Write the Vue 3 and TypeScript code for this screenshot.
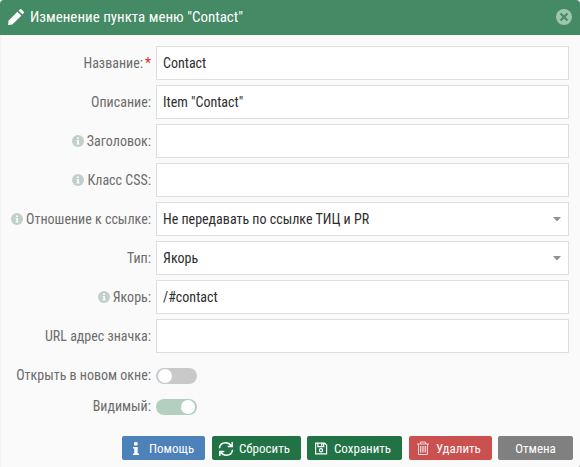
<script setup lang="ts">
import { ref } from 'vue'

interface Field {
  label: string
  value: string
  required?: boolean
  info?: boolean
  select?: boolean
}

const fields = ref<Field[]>([
  { label: 'Название:', value: 'Contact', required: true },
  { label: 'Описание:', value: 'Item "Contact"' },
  { label: 'Заголовок:', value: '', info: true },
  { label: 'Класс CSS:', value: '', info: true },
  { label: 'Отношение к ссылке:', value: 'Не передавать по ссылке ТИЦ и PR', info: true, select: true },
  { label: 'Тип:', value: 'Якорь', select: true },
  { label: 'Якорь:', value: '/#contact', info: true },
  { label: 'URL адрес значка:', value: '' },
])

const toggles = ref([
  { label: 'Открыть в новом окне:', on: false },
  { label: 'Видимый:', on: true },
])
</script>

<template>
  <div class="window">
    <header class="header">
      <svg class="pencil" width="18" height="18" viewBox="0 0 18 18">
        <path d="M1 17l.6-4.400L10.400 3.800l3.900 3.900-8.900 8.700zM11.600 2.600l1.200-1.200q.9-.8 1.800 0l2 2q.9.900 0 1.800l-1.200 1.200z" fill="#fff" />
      </svg>
      <h1 class="title">Изменение пункта меню "Contact"</h1>
      <button class="close" aria-label="Закрыть">
        <svg width="16" height="16" viewBox="0 0 16 16">
          <circle cx="8" cy="8" r="8" fill="#a1c4b0" />
          <path d="M4.500 4.500l7 7M11.500 4.500l-7 7" stroke="#448a64" stroke-width="2.100" />
        </svg>
      </button>
    </header>

    <main class="form">
      <div v-for="f in fields" :key="f.label" class="row">
        <label class="label">
          <svg v-if="f.info" class="info" width="12" height="12" viewBox="0 0 12 12">
            <circle cx="6" cy="6" r="6" fill="#c1d0c8" />
            <path d="M5 2.500h2v1.600H5zM4.500 5h2.500v3.500h.7v1H4.400v-1h.8V6h-.7z" fill="#fafafa" />
          </svg>
          <span>{{ f.label }}</span><span v-if="f.required" class="star">*</span>
        </label>
        <div class="box">
          <span>{{ f.value }}</span>
          <svg v-if="f.select" class="arrow" width="8" height="4" viewBox="0 0 8 4">
            <path d="M0 0h8L4.500 4h-1z" fill="#919191" />
          </svg>
        </div>
      </div>
      <div v-for="t in toggles" :key="t.label" class="row toggle-row">
        <label class="label">{{ t.label }}</label>
        <button class="switch" :class="{ on: t.on }" role="switch" :aria-checked="t.on" @click="t.on = !t.on">
          <span class="knob"></span>
        </button>
      </div>
    </main>

    <footer class="footer">
      <button class="btn help">
        <svg width="16" height="16" viewBox="0 0 16 16">
          <path d="M6 1.500q2-1.100 3.600 0v2.600q-1.700 1-3.600 0zM5 6h4.700v6.400H11V14H5v-1.600h1.300V7.600H5z" fill="#fff" />
        </svg>
        <span>Помощь</span>
      </button>
      <button class="btn reset">
        <svg width="16" height="16" viewBox="0 0 16 16" fill="none" stroke="#fff" stroke-width="1.500">
          <path d="M1.500 7.200C1.800 3.700 4.500 1.700 7.700 1.700c2.300 0 4 1 5.500 3M14.200 1v4.500H9.700M14.500 8.800c-.3 3.500-3 5.500-6.200 5.500-2.300 0-4-1-5.500-3M1.800 15v-4.500h4.500" />
        </svg>
        <span>Сбросить</span>
      </button>
      <button class="btn save">
        <svg width="16" height="16" viewBox="0 0 16 16" fill="none" stroke="#fff" stroke-width="1.200">
          <path d="M2.600 2.100h8.900l2.100 1.900v8.900H2.600zM4.900 2.100v3.600h5.800V2.100" />
          <path d="M8 2.500h1.500v2.200H8z" fill="#fff" stroke="none" />
          <circle cx="8" cy="9.300" r="1.600" />
        </svg>
        <span>Сохранить</span>
      </button>
      <button class="btn delete">
        <svg width="16" height="16" viewBox="0 0 16 16" fill="none" stroke="#f6d9d9" stroke-width="1">
          <path d="M2 3h12M5.500 3v-2h5v2M3.500 3v10.500h9V3M5.500 5v6.500M7.200 5v6.500M8.900 5v6.500M10.600 5v6.500" />
        </svg>
        <span>Удалить</span>
      </button>
      <button class="btn cancel"><span>Отмена</span></button>
    </footer>
    <i class="grip"></i>
  </div>
</template>

<style>
body {
  background: #fff;
}
</style>

<style scoped>
.window {
  position: relative;
  box-sizing: border-box;
  height: 467px;
  overflow: hidden;
  border-radius: 4px 4px 0 0;
  background: linear-gradient(to right, #f3f3f3 1px, #fafafa 1px);
  font-family: Roboto, "Liberation Sans", sans-serif;
  font-stretch: 75%;
  font-size: 14px;
}
.header {
  display: flex;
  align-items: center;
  box-sizing: border-box;
  height: 35px;
  padding: 0 8px 2px 7px;
  background: #448a64;
}
.title {
  flex: 1;
  margin: 0 0 0 5px;
  color: #fff;
  font-size: 15px;
  font-weight: 400;
}
.close {
  display: flex;
  margin: 0;
  padding: 0;
  border: 0;
  background: none;
}
.form {
  display: flex;
  flex-direction: column;
  gap: 5px;
  padding: 11px 11px 0 0;
}
.row {
  display: flex;
  align-items: center;
  gap: 5px;
  height: 34px;
}
.label {
  display: flex;
  align-items: center;
  justify-content: flex-end;
  width: 151px;
  color: #6c6c6c;
  white-space: nowrap;
}
.info {
  margin-right: 3px;
}
.star {
  margin-left: 2px;
  color: #e22;
}
.box {
  display: flex;
  flex: 1;
  align-items: center;
  justify-content: space-between;
  box-sizing: border-box;
  height: 34px;
  padding: 0 7px 0 6px;
  border: 1px solid #dedede;
  background: #fff;
  color: #2d2d2d;
}
.toggle-row {
  height: 16px;
  margin-bottom: 10px;
}
.toggle-row .label {
  padding-bottom: 2px;
}
.row:not(.toggle-row) + .toggle-row {
  margin-top: 10px;
}
.switch {
  display: flex;
  box-sizing: border-box;
  width: 41px;
  height: 16px;
  padding: 1px;
  border: 0;
  border-radius: 8px;
  background: #c9c9c9;
}
.switch.on {
  justify-content: flex-end;
  background: #b2cfc0;
}
.knob {
  width: 14px;
  height: 14px;
  margin: 0 1px;
  border-radius: 50%;
  background: #fff;
}
.footer {
  display: flex;
  justify-content: flex-end;
  gap: 6px;
  padding: 11px 7px 0 0;
}
.btn {
  display: flex;
  align-items: center;
  box-sizing: border-box;
  height: 24px;
  padding: 1px 0 0 6px;
  border: 0;
  border-radius: 2px;
  color: #fff;
  font: inherit;
  font-size: 13px;
  white-space: nowrap;
}
.btn svg {
  flex: none;
  margin-right: 5px;
}
.help {
  width: 83px;
  margin-right: 1px;
  background: #4c81b9;
}
.reset {
  width: 89px;
  background: #217346;
}
.save {
  width: 95px;
  margin-right: 1px;
  background: #217346;
}
.delete {
  width: 83px;
  background: #cb5050;
}
.cancel {
  justify-content: center;
  width: 75px;
  padding: 1px 0 0;
  background: #808080;
}
.grip {
  position: absolute;
  right: 0;
  bottom: 0;
  width: 2px;
  height: 2px;
  background: #ccc;
  clip-path: polygon(100% 0, 100% 100%, 0 100%);
}
</style>
